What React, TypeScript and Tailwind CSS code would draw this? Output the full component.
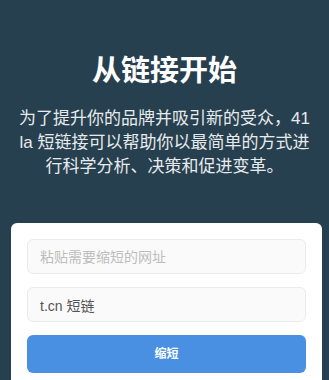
const font = { fontFamily: '"Liberation Sans", "Noto Sans CJK SC", sans-serif' };

export default function App() {
  return (
    <div className="min-h-[380px] bg-[#27404f] pt-[52px]" style={font}>
      <h1 className="text-center text-[29px] font-bold leading-[38px] text-white">从链接开始</h1>

      <p className="mt-[17px] px-4 text-center text-[17px] leading-[24px] text-[#e8ebed]">
        为了提升你的品牌并吸引新的受众，41 la 短链接可以帮助你以最简单的方式进行科学分析、决策和促进变革。
      </p>

      <div className="ml-[11px] mt-[44px] w-[311px] rounded-t-[6px] bg-white px-4 pb-4 pt-4">
        <div className="flex flex-col gap-[13px]">
          <input
            type="text"
            placeholder="粘贴需要缩短的网址"
            className="h-[35px] w-full rounded-[6px] border border-[#ebebeb] bg-[#fafafa] px-[12px] text-[14px] text-[#555] outline-none placeholder:text-[#bdbdbd]"
          />
          <input
            type="text"
            defaultValue="t.cn 短链"
            className="h-[35px] w-full rounded-[6px] border border-[#ebebeb] bg-[#fafafa] px-[12px] text-[14px] text-[#555] outline-none"
          />
          <button
            type="button"
            className="h-[38px] w-full rounded-[6px] bg-[#4a90e2] text-[12px] font-bold text-white"
          >
            缩短
          </button>
        </div>
      </div>
    </div>
  );
}
